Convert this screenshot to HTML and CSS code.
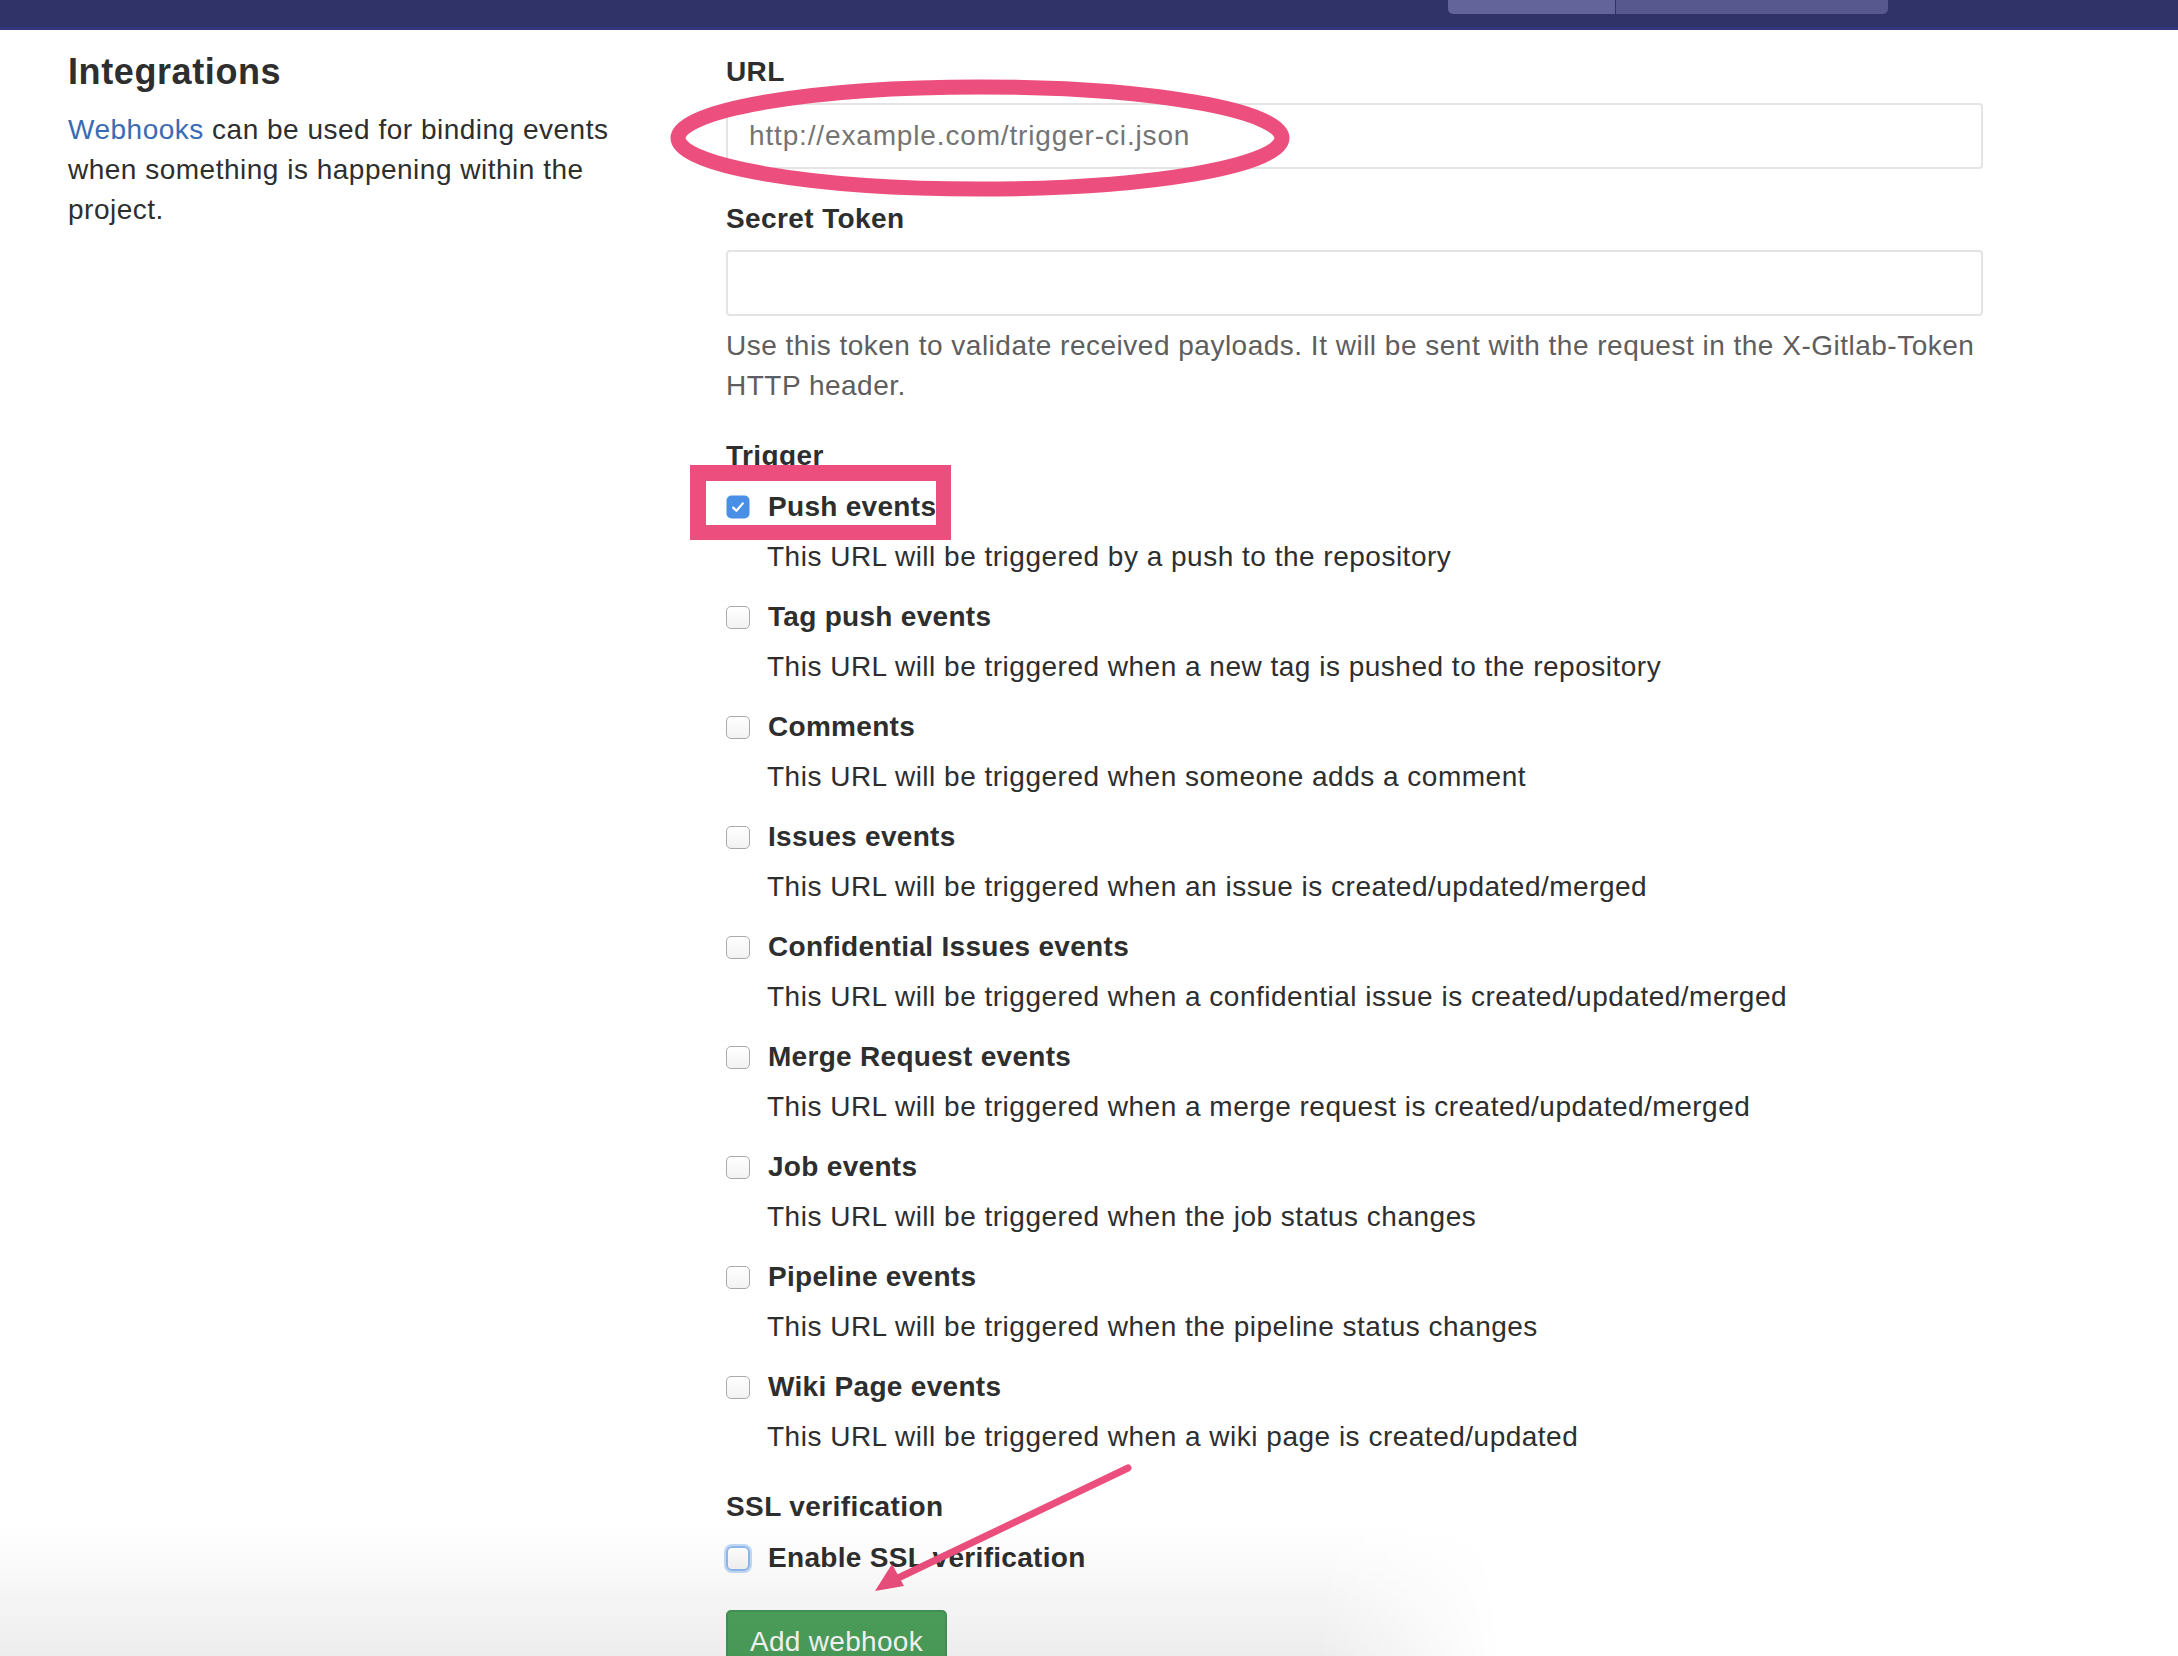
FILE: index.html
```html
<!DOCTYPE html>
<html lang="en">
<head>
<meta charset="utf-8">
<title>Integrations – Webhooks</title>
<link rel="stylesheet" href="styles.css">
</head>
<body>
<div class="page">
  <header class="topbar">
    <div class="tabs">
      <span class="tab tab-a"></span>
      <span class="tab tab-b"></span>
    </div>
  </header>

  <main class="content">
    <section class="intro">
      <h4 class="intro-title">Integrations</h4>
      <p class="intro-text"><a class="link" href="#">Webhooks</a> can be used for binding events when something is happening within the project.</p>
    </section>

    <form class="form">
      <div class="group">
        <label class="lbl">URL</label>
        <div class="field"><span class="placeholder">http://example.com/trigger-ci.json</span></div>
      </div>

      <div class="group">
        <label class="lbl">Secret Token</label>
        <div class="field"></div>
        <p class="help">Use this token to validate received payloads. It will be sent with the request in the X-Gitlab-Token HTTP header.</p>
      </div>

      <div class="group">
        <div class="lbl">Trigger</div>
        <ul class="checks">
          <li class="check-item">
            <div class="check-row">
              <span class="cb cb-on"><svg viewBox="0 0 24 24" width="24" height="24"><rect x="0.5" y="0.5" width="23" height="23" rx="5" fill="#4a8fe6"/><path d="M7.2 12.6 L10.4 15.8 L16.8 8.4" fill="none" stroke="#fff" stroke-width="2.2" stroke-linecap="round" stroke-linejoin="round"/></svg></span>
              <span class="check-label">Push events</span>
            </div>
            <p class="check-desc">This URL will be triggered by a push to the repository</p>
          </li>
          <li class="check-item">
            <div class="check-row"><span class="cb"></span><span class="check-label">Tag push events</span></div>
            <p class="check-desc">This URL will be triggered when a new tag is pushed to the repository</p>
          </li>
          <li class="check-item">
            <div class="check-row"><span class="cb"></span><span class="check-label">Comments</span></div>
            <p class="check-desc">This URL will be triggered when someone adds a comment</p>
          </li>
          <li class="check-item">
            <div class="check-row"><span class="cb"></span><span class="check-label">Issues events</span></div>
            <p class="check-desc">This URL will be triggered when an issue is created/updated/merged</p>
          </li>
          <li class="check-item">
            <div class="check-row"><span class="cb"></span><span class="check-label">Confidential Issues events</span></div>
            <p class="check-desc">This URL will be triggered when a confidential issue is created/updated/merged</p>
          </li>
          <li class="check-item">
            <div class="check-row"><span class="cb"></span><span class="check-label">Merge Request events</span></div>
            <p class="check-desc">This URL will be triggered when a merge request is created/updated/merged</p>
          </li>
          <li class="check-item">
            <div class="check-row"><span class="cb"></span><span class="check-label">Job events</span></div>
            <p class="check-desc">This URL will be triggered when the job status changes</p>
          </li>
          <li class="check-item">
            <div class="check-row"><span class="cb"></span><span class="check-label">Pipeline events</span></div>
            <p class="check-desc">This URL will be triggered when the pipeline status changes</p>
          </li>
          <li class="check-item">
            <div class="check-row"><span class="cb"></span><span class="check-label">Wiki Page events</span></div>
            <p class="check-desc">This URL will be triggered when a wiki page is created/updated</p>
          </li>
        </ul>
      </div>

      <div class="group">
        <div class="lbl">SSL verification</div>
        <div class="check-row ssl-row"><span class="cb cb-focus"></span><span class="check-label">Enable SSL verification</span></div>
      </div>

      <div class="actions">
        <button type="button" class="btn-create">Add webhook</button>
      </div>
    </form>
  </main>

  <!-- annotations drawn over the screenshot -->
  <svg class="mark-ellipse" viewBox="0 0 636 132" width="636" height="132">
    <ellipse cx="316" cy="66" rx="302" ry="51" fill="none" stroke="#ec4f7d" stroke-width="15"/>
  </svg>
  <div class="mark-rect"></div>
  <svg class="mark-arrow" viewBox="0 0 280 150" width="280" height="150">
    <line x1="262" y1="10" x2="30" y2="121" stroke="#ec4f7d" stroke-width="7" stroke-linecap="round"/>
    <polygon points="9,133 26,106 38,128" fill="#ec4f7d"/>
  </svg>
  <div class="bottom-shade"></div>
</div>
</body>
</html>
```

FILE: styles.css
```css
* { box-sizing: border-box; }

html, body {
  margin: 0;
  padding: 0;
  background: #ffffff;
}

body {
  font-family: "Liberation Sans", Arial, sans-serif;
  color: #2e2e2e;
  width: 2178px;
  height: 1656px;
  overflow: hidden;
}

.page {
  position: relative;
  width: 2178px;
  height: 1656px;
  overflow: hidden;
}

/* top bar */
.topbar {
  height: 30px;
  background: #2f3368;
  border-bottom: 3px solid #35377e;
  display: flex;
  justify-content: flex-start;
}

.tabs {
  display: flex;
  margin-left: 1448px;
  height: 14px;
}

.tab {
  display: block;
  height: 14px;
}

.tab-a {
  width: 167px;
  background: #63649a;
  border-radius: 0 0 0 5px;
}

.tab-b {
  width: 272px;
  margin-left: 1px;
  background: #56588e;
  border-radius: 0 0 5px 0;
}

/* main layout */
.content {
  display: grid;
  grid-template-columns: 588px 1257px;
  column-gap: 70px;
  padding: 22px 0 0 68px;
}

.intro-title {
  margin: 0 0 18px;
  font-size: 36px;
  line-height: 40px;
  font-weight: 700;
  letter-spacing: 0.6px;
  color: #2e2e2e;
}

.intro-text {
  margin: 0;
  font-size: 28px;
  line-height: 40px;
  letter-spacing: 0.5px;
  color: #2e2e2e;
}

.link {
  color: #3b6bb2;
  text-decoration: none;
}

/* form */
.form {
  display: flex;
  flex-direction: column;
}

.group {
  margin-bottom: 30px;
}

.lbl {
  display: block;
  font-size: 28px;
  line-height: 40px;
  font-weight: 700;
  letter-spacing: 0.4px;
  color: #2e2e2e;
  margin-bottom: 11px;
}

.field {
  height: 66px;
  border: 2px solid #e4e4e4;
  border-radius: 4px;
  background: #fff;
  display: flex;
  align-items: center;
  padding: 0 21px;
}

.placeholder {
  font-size: 28px;
  letter-spacing: 0.85px;
  color: #747474;
}

.help {
  margin: 10px 0 0;
  font-size: 28px;
  line-height: 40px;
  letter-spacing: 0.5px;
  color: #5e5e5e;
}

.checks {
  list-style: none;
  margin: 0;
  padding: 0;
  display: flex;
  flex-direction: column;
  gap: 20px;
}

.check-row {
  display: flex;
  align-items: center;
  height: 40px;
}

.cb {
  width: 24px;
  height: 23px;
  flex: 0 0 24px;
  border: 1.5px solid #aaaaaa;
  border-radius: 5px;
  background: linear-gradient(#ffffff, #f2f2f2);
  margin-right: 18px;
}

.cb-on {
  border: none;
  background: none;
  height: 24px;
  display: flex;
}

.cb-focus {
  height: 25px;
  border: 2px solid #8fb8ec;
  box-shadow: 0 0 0 2px #c3dbf7;
  border-radius: 6px;
}

.check-label {
  font-size: 28px;
  line-height: 40px;
  font-weight: 700;
  letter-spacing: 0.3px;
  color: #2e2e2e;
}

.check-desc {
  margin: 10px 0 0;
  padding-left: 41px;
  font-size: 28px;
  line-height: 40px;
  letter-spacing: 0.5px;
  color: #2e2e2e;
}

.actions {
  margin-top: 2px;
}

.btn-create {
  height: 64px;
  padding: 0 22px;
  font-family: "Liberation Sans", Arial, sans-serif;
  font-size: 28px;
  letter-spacing: 0.3px;
  color: #ffffff;
  background: #4ea35d;
  border: 2px solid #46955a;
  border-radius: 5px;
}

/* annotation overlays */
.mark-ellipse {
  position: absolute;
  left: 664px;
  top: 72px;
}

.mark-rect {
  position: absolute;
  left: 690px;
  top: 465px;
  width: 261px;
  height: 75px;
  border: 16px solid #ec4f7d;
  border-right-width: 15px;
  border-bottom-width: 15px;
}

.mark-arrow {
  position: absolute;
  left: 866px;
  top: 1458px;
}

.bottom-shade {
  position: absolute;
  left: 0;
  bottom: 0;
  width: 1500px;
  height: 130px;
  pointer-events: none;
  background: linear-gradient(to top, rgba(0, 0, 0, 0.07), rgba(0, 0, 0, 0));
  -webkit-mask-image: linear-gradient(to right, #000 0%, #000 88%, transparent 100%);
  mask-image: linear-gradient(to right, #000 0%, #000 88%, transparent 100%);
}
```
